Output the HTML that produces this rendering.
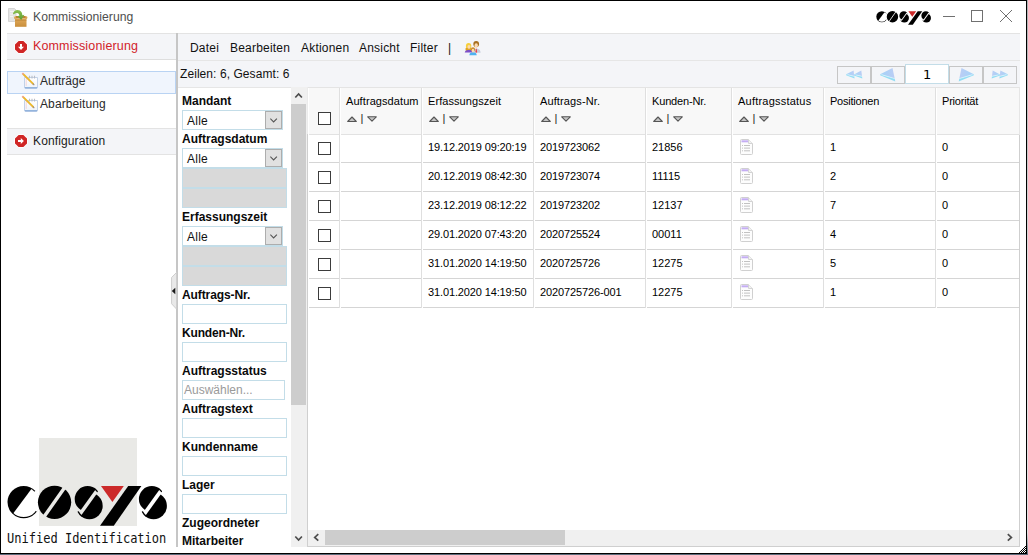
<!DOCTYPE html>
<html lang="de">
<head>
<meta charset="utf-8">
<title>Kommissionierung</title>
<style>
html,body{margin:0;padding:0;}
body{width:1028px;height:555px;overflow:hidden;background:#fff;font-family:"Liberation Sans",sans-serif;color:#000;position:relative;}
div,span,svg{position:absolute;box-sizing:border-box;}
span{white-space:nowrap;}
.g{left:0;top:0;width:0;height:0;}
.t{font-size:12px;line-height:14px;}
.b{font-weight:bold;font-size:12px;line-height:14px;color:#0a0a0a;}
.c{font-size:11px;line-height:13px;color:#000;}
.hl{height:1px;background:#dcdcdc;}
.vl{width:1px;background:#dcdcdc;}
.cb{width:13px;height:13px;border:1px solid #3c3c3c;background:#fff;}
.fi{left:182px;width:105px;height:20px;border:1px solid #c3dde8;background:#fff;}
.fg{left:182px;width:105px;height:20px;border:1px solid #c3dde8;background:#d9d9d9;}
.sel{left:182px;width:101px;height:20px;border:1px solid #c3dde8;background:#fff;}
.dd{left:265px;width:17px;height:18px;border:1px solid #adadad;background:#e1e1e1;}
.pb{top:66px;width:34px;height:18px;border:1px solid #c6c6c6;background:#f4f5f8;}
</style>
</head>
<body>
<div id="window" class="g">
<div style="left:0;top:0;width:1027px;height:554px;border:1px solid #000;background:#fff"></div>
<div style="left:0;top:554px;width:1028px;height:1px;background:#5d6c7c"></div>
<div style="left:1027px;top:0;width:1px;height:555px;background:linear-gradient(#b0b3b5 0,#b8b8b8 12%,#c8c8c8 28%,#e0e0e0 50%,#e2e2e2 96%,#5d6c7c 100%)"></div>
<div class="hl" style="left:7px;top:33px;width:1013px;background:#e3e3e3"></div>
<svg style="left:1018px;top:545px" width="8" height="8" viewBox="1018 545 8 8"><path d="M1025 546h1v1h-1zM1024 547h1v1h-1zM1023 548h1v1h-1zM1025 548h1v1h-1zM1022 549h1v1h-1zM1024 549h1v1h-1zM1021 550h1v1h-1zM1023 550h1v1h-1zM1025 550h1v1h-1zM1020 551h1v1h-1zM1022 551h1v1h-1zM1024 551h1v1h-1zM1019 552h1v1h-1zM1021 552h1v1h-1zM1023 552h1v1h-1zM1025 552h1v1h-1z" fill="#000"/></svg>
</div>
<div id="titlebar" class="g">
<span style="left:33px;top:9px;font-size:12.2px;line-height:16px;color:#4e4e4e;">Kommissionierung</span>
<div style="left:943px;top:16px;width:12px;height:1px;background:#707070"></div>
<div style="left:971px;top:10px;width:12px;height:12px;border:1px solid #707070"></div>
<svg style="left:999px;top:9px" width="14" height="14" viewBox="0 0 14 14"><path d="M1 1 L13 13 M13 1 L1 13" stroke="#707070" stroke-width="1" fill="none"/></svg>
<svg style="left:7px;top:7px" width="22" height="22" viewBox="0 0 22 22"><defs><linearGradient id="gbx" x1="0" y1="0" x2="0" y2="1"><stop offset="0" stop-color="#e0a95a"/><stop offset="1" stop-color="#c98f3c"/></linearGradient><linearGradient id="ggr" x1="0" y1="0" x2="0" y2="1"><stop offset="0" stop-color="#8cc152"/><stop offset="1" stop-color="#5f9e2f"/></linearGradient></defs><path d="M1.5 1.5 H7.5 L9 3 V14.5 H1.5 Z" fill="#e4e4e4" stroke="#cfcfcf" stroke-width="0.8"/><path d="M3 4.5 H7 M3 7 H7 M3 9.5 H6" stroke="#f4f4f4" stroke-width="1"/><path d="M7.5 11.5 L9 9 H18.5 L20 11.5 Z" fill="#b98132"/><path d="M7 10 L8.5 9 L9.5 11.5 L7.5 12 Z M20.5 10 L19 9 L18 11.5 L20 12 Z" fill="#dba652"/><rect x="8" y="11.5" width="11.5" height="8.3" fill="url(#gbx)"/><path d="M8 13.2 H19.5" stroke="#b07a2c" stroke-width="0.8" opacity=".7"/><path d="M6 6.8 C6.5 3.2 10.5 2.2 12.8 3.6 C14.6 4.7 15.3 6.6 15.3 8.2 L17.4 7.8 L14.2 13 L10.3 8.9 L12.4 8.7 C12.3 7.2 11.4 6.2 10 6 C8.6 5.8 7.4 6.6 6.8 7.6 Z" fill="url(#ggr)"/></svg>
<svg role="img" aria-label="cosys" style="left:870px;top:6px" width="66" height="22" viewBox="870 6 66 22"><title>cosys</title><g transform="translate(873.727 -155.495) scale(0.3430)"><clipPath id="ccb"><circle cx="23.7" cy="502.1" r="15"/></clipPath><circle cx="23.7" cy="502.1" r="16.2" fill="#000"/><path d="M33.6 486 L12 515.1 L12 524 L44 524 L44 486 Z" fill="#fff" clip-path="url(#ccb)"/><clipPath id="cob"><circle cx="23.7" cy="502.1" r="16.6"/></clipPath><path d="M23.7 502.1 L41.7 484.7 L46 500 L43.9 516.8 Z" fill="#fff" clip-path="url(#cob)"/><circle cx="54.55" cy="502.35" r="16.65" fill="#000"/><path d="M67.14 484 L41.76 520" stroke="#fff" stroke-width="2.48"/><clipPath id="sab0"><polygon points="100.12,484 72.76,522 55.00,522 55.00,484"/></clipPath><clipPath id="sbb0"><polygon points="103.22,484 75.86,522 112.00,522 112.00,484"/></clipPath><circle cx="87.60" cy="499" r="12.9" fill="#000" clip-path="url(#sab0)"/><circle cx="89.40" cy="505.9" r="13.3" fill="#000" clip-path="url(#sbb0)"/><path d="M95.14 489.35 A12.25 12.25 0 0 1 97.20 491.45" stroke="#000" stroke-width="1.3" fill="none" stroke-linecap="round"/><path d="M81.61 515.87 A12.65 12.65 0 0 1 78.30 511.9" stroke="#000" stroke-width="1.3" fill="none" stroke-linecap="round"/><clipPath id="sab1"><polygon points="164.12,484 136.76,522 119.20,522 119.20,484"/></clipPath><clipPath id="sbb1"><polygon points="167.62,484 140.26,522 176.20,522 176.20,484"/></clipPath><circle cx="151.80" cy="499" r="12.9" fill="#000" clip-path="url(#sab1)"/><circle cx="153.60" cy="505.9" r="13.3" fill="#000" clip-path="url(#sbb1)"/><path d="M159.34 489.35 A12.25 12.25 0 0 1 161.40 491.45" stroke="#000" stroke-width="1.3" fill="none" stroke-linecap="round"/><path d="M145.81 515.87 A12.65 12.65 0 0 1 142.50 511.9" stroke="#000" stroke-width="1.3" fill="none" stroke-linecap="round"/><path d="M101 486 H123.8 L112.4 502 Z" fill="#cc2a2a"/><path d="M128.2 486 H141.4 L113.8 525.8 H100 Z" fill="#000"/></g></svg>
</div>
<div id="sidebar" class="g">
<div style="left:7px;top:34px;width:169px;height:25px;background:#f4f5f8"></div>
<div class="hl" style="left:7px;top:59px;width:169px;background:#dedede"></div>
<span style="left:33px;top:39px;font-size:12.5px;line-height:15px;color:#d2232a;letter-spacing:0.14px">Kommissionierung</span>
<div style="left:7px;top:71px;width:169px;height:23px;border:1px solid #b9d3f3;background:#f0f5fd"></div>
<span class="t" style="left:40px;top:74px;color:#2a2a2a">Aufträge</span>
<span class="t" style="left:40px;top:97px;color:#2a2a2a;letter-spacing:0.1px">Abarbeitung</span>
<div style="left:7px;top:128px;width:169px;height:27px;background:#f4f5f8;border-top:1px solid #e3e3e3;border-bottom:1px solid #e3e3e3"></div>
<span class="t" style="left:33px;top:134px;color:#1a1a1a;letter-spacing:0.13px">Konfiguration</span>
<svg style="left:14px;top:40px" width="14" height="14" viewBox="-1 -1 14 14"><path d="M3.5 0 H8.5 L12 3.5 V8.5 L8.5 12 H3.5 L0 8.5 V3.5 Z" fill="#fff" stroke="#fff" stroke-width="1.6" stroke-linejoin="round"/><path d="M3.6 0 H8.4 L12 3.6 V8.4 L8.4 12 H3.6 L0 8.4 V3.6 Z" fill="#d02626"/><path d="M5 3 H7 V5.8 H9 L6 8.9 L3 5.8 H5 Z" fill="#fff"/></svg>
<svg style="left:14px;top:134px" width="14" height="14" viewBox="-1 -1 14 14"><path d="M3.5 0 H8.5 L12 3.5 V8.5 L8.5 12 H3.5 L0 8.5 V3.5 Z" fill="#fff" stroke="#fff" stroke-width="1.6" stroke-linejoin="round"/><path d="M3.6 0 H8.4 L12 3.6 V8.4 L8.4 12 H3.6 L0 8.4 V3.6 Z" fill="#d02626"/><path d="M3 5 V7 H5.8 V9 L8.9 6 L5.8 3 V5 Z" fill="#fff"/></svg>
<svg style="left:21px;top:72px" width="18" height="18" viewBox="0 0 18 18"><defs><linearGradient id="np72" x1="0" y1="0" x2="0" y2="1"><stop offset="0" stop-color="#ffffff"/><stop offset="1" stop-color="#eef3fa"/></linearGradient></defs><path d="M3.5 5.5 H16.5 V15 Q16.5 16.3 15.2 16.3 H4.8 Q3.5 16.3 3.5 15 Z" fill="url(#np72)" stroke="#bccde6" stroke-width="0.9"/><path d="M3.8 15.8 H16.2" stroke="#86abd8" stroke-width="1.3"/><path d="M5.2 6 V13.8" stroke="#f3c6c6" stroke-width="0.7"/><path d="M8.5 3.8 V6.4 M11 3.8 V6.4 M13.5 3.8 V6.4" stroke="#b9bcc4" stroke-width="1.1"/><path d="M2 1.8 L12.4 12.2" stroke="#dda22a" stroke-width="1.8" stroke-linecap="butt"/><path d="M2.2 1.7 L12.3 11.8" stroke="#fcd432" stroke-width="1.0" stroke-linecap="butt"/><path d="M1.3 1.1 L2.5 2.3" stroke="#f0a58c" stroke-width="1.9"/><path d="M11.9 11.7 L13.3 13.1" stroke="#9a8a76" stroke-width="1.1"/></svg>
<svg style="left:21px;top:95px" width="18" height="18" viewBox="0 0 18 18"><defs><linearGradient id="np95" x1="0" y1="0" x2="0" y2="1"><stop offset="0" stop-color="#ffffff"/><stop offset="1" stop-color="#eef3fa"/></linearGradient></defs><path d="M3.5 5.5 H16.5 V15 Q16.5 16.3 15.2 16.3 H4.8 Q3.5 16.3 3.5 15 Z" fill="url(#np95)" stroke="#bccde6" stroke-width="0.9"/><path d="M3.8 15.8 H16.2" stroke="#86abd8" stroke-width="1.3"/><path d="M5.2 6 V13.8" stroke="#f3c6c6" stroke-width="0.7"/><path d="M8.5 3.8 V6.4 M11 3.8 V6.4 M13.5 3.8 V6.4" stroke="#b9bcc4" stroke-width="1.1"/><path d="M2 1.8 L12.4 12.2" stroke="#dda22a" stroke-width="1.8" stroke-linecap="butt"/><path d="M2.2 1.7 L12.3 11.8" stroke="#fcd432" stroke-width="1.0" stroke-linecap="butt"/><path d="M1.3 1.1 L2.5 2.3" stroke="#f0a58c" stroke-width="1.9"/><path d="M11.9 11.7 L13.3 13.1" stroke="#9a8a76" stroke-width="1.1"/></svg>
<div style="left:39px;top:438px;width:98px;height:88px;background:#e9e9e6"></div>
<svg role="img" aria-label="cosys" style="left:0;top:480px" width="176" height="50" viewBox="0 480 176 50"><title>cosys</title><clipPath id="cca"><circle cx="23.7" cy="502.1" r="15"/></clipPath><circle cx="23.7" cy="502.1" r="16.2" fill="#000"/><path d="M33.6 486 L12 515.1 L12 524 L44 524 L44 486 Z" fill="#fff" clip-path="url(#cca)"/><clipPath id="coa"><circle cx="23.7" cy="502.1" r="16.6"/></clipPath><path d="M23.7 502.1 L41.7 484.7 L46 500 L43.9 516.8 Z" fill="#fff" clip-path="url(#coa)"/><circle cx="54.55" cy="502.35" r="16.65" fill="#000"/><path d="M67.14 484 L41.76 520" stroke="#e9e9e6" stroke-width="3.45"/><clipPath id="saa0"><polygon points="99.52,484 72.16,522 55.00,522 55.00,484"/></clipPath><clipPath id="sba0"><polygon points="103.82,484 76.46,522 112.00,522 112.00,484"/></clipPath><circle cx="87.60" cy="499" r="12.9" fill="#000" clip-path="url(#saa0)"/><circle cx="89.40" cy="505.9" r="13.3" fill="#000" clip-path="url(#sba0)"/><path d="M95.14 489.35 A12.25 12.25 0 0 1 97.20 491.45" stroke="#000" stroke-width="1.3" fill="none" stroke-linecap="round"/><path d="M81.61 515.87 A12.65 12.65 0 0 1 78.30 511.9" stroke="#000" stroke-width="1.3" fill="none" stroke-linecap="round"/><clipPath id="saa1"><polygon points="163.52,484 136.16,522 119.20,522 119.20,484"/></clipPath><clipPath id="sba1"><polygon points="168.22,484 140.86,522 176.20,522 176.20,484"/></clipPath><circle cx="151.80" cy="499" r="12.9" fill="#000" clip-path="url(#saa1)"/><circle cx="153.60" cy="505.9" r="13.3" fill="#000" clip-path="url(#sba1)"/><path d="M159.34 489.35 A12.25 12.25 0 0 1 161.40 491.45" stroke="#000" stroke-width="1.3" fill="none" stroke-linecap="round"/><path d="M145.81 515.87 A12.65 12.65 0 0 1 142.50 511.9" stroke="#000" stroke-width="1.3" fill="none" stroke-linecap="round"/><path d="M101 486 H123.8 L112.4 502 Z" fill="#cc2a2a"/><path d="M128.2 486 H141.4 L113.8 525.8 H100 Z" fill="#000"/></svg>
<span style="left:7px;top:529.7px;font-family:'DejaVu Sans Mono','Liberation Mono',monospace;font-size:13.6px;line-height:17px;color:#111;transform-origin:0 0;transform:scaleX(0.885)">Unified Identification</span>
</div>
<div id="splitter" class="g">
<div style="left:176px;top:33px;width:2px;height:514px;background:#c6c6c6"></div>
<svg style="left:170px;top:272px" width="7" height="38" viewBox="0 0 7 38"><path d="M6.5 0.5 L1.6 5.5 V31.8 L6.5 37 Z" fill="#e9e9e9" stroke="#cdcdcd" stroke-width="1"/><path d="M5.3 15.8 V22.2 L1.8 19 Z" fill="#1a1a1a"/></svg>
</div>
<div id="menubar" class="g">
<div style="left:178px;top:34px;width:842px;height:26px;background:#f4f5f8"></div>
<div class="hl" style="left:178px;top:60px;width:842px;background:#e6e6e6"></div>
<div style="left:178px;top:61px;width:842px;height:26px;background:#f4f5f8"></div>
<span class="t" style="left:190px;top:41px;color:#111;letter-spacing:0.2px">Datei</span>
<span class="t" style="left:230px;top:41px;color:#111;letter-spacing:0.2px">Bearbeiten</span>
<span class="t" style="left:301px;top:41px;color:#111;letter-spacing:0.2px">Aktionen</span>
<span class="t" style="left:359px;top:41px;color:#111;letter-spacing:0.2px">Ansicht</span>
<span class="t" style="left:410px;top:41px;color:#111;letter-spacing:0.2px">Filter</span>
<span class="t" style="left:448px;top:41px;color:#111;letter-spacing:0.2px">|</span>
<svg style="left:464px;top:40px" width="18" height="16" viewBox="0 -0.5 18 16"><ellipse cx="4.6" cy="5.6" rx="2.7" ry="3.2" fill="#f6cf3a"/><path d="M1.6 7.5 Q1 10 2.5 10.5 L6.8 10.5 Q8 9.5 7.2 7 Z" fill="#e0a325"/><ellipse cx="5" cy="6.4" rx="1.5" ry="1.9" fill="#fbd9b0"/><path d="M0.7 12 Q0.9 9.6 3.6 9.5 L6.6 9.5 Q8.6 9.8 8.8 12 Z" fill="#7b4fc9"/><ellipse cx="12.2" cy="3.6" rx="2.9" ry="3.1" fill="#a8701f"/><ellipse cx="12.2" cy="5" rx="1.7" ry="2.3" fill="#fbd9b0"/><path d="M8.8 12.3 Q8.8 8.6 11.2 8.2 L13.6 8.2 Q16.4 8.6 16.6 12.3 Z" fill="#c5ccdc"/><path d="M11.9 8.2 L12.7 8.2 L13.2 11.8 L12.3 12.3 L11.4 11.8 Z" fill="#e8444c"/><ellipse cx="9" cy="8.9" rx="2.1" ry="2.1" fill="#c98a28"/><ellipse cx="9" cy="10.2" rx="1.3" ry="1.9" fill="#fbd9b0"/><path d="M5.3 14.8 Q5.3 12.4 7.8 12.1 L10.4 12.1 Q12.7 12.4 12.8 14.8 Z" fill="#4db1f0"/></svg>
</div>
<div id="toolbar" class="g">
<span class="t" style="left:180px;top:67px;color:#111;letter-spacing:0.07px">Zeilen: 6, Gesamt: 6</span>
<div class="pb" style="left:837px"></div>
<div class="pb" style="left:871px"></div>
<div class="pb" style="left:949px"></div>
<div class="pb" style="left:983px"></div>
<div style="left:905px;top:64px;width:44px;height:20px;border:1px solid #c3dde8;background:#fff"></div>
<span style="left:923px;top:67px;font-size:13px;line-height:16px;font-family:'DejaVu Sans','Liberation Sans',sans-serif;color:#000">1</span>
<svg style="left:837px;top:66px" width="180" height="18" viewBox="837 66 180 18"><defs><linearGradient id="pt1" x1="0" y1="0" x2="1" y2="0"><stop offset="0" stop-color="#a3d3f8"/><stop offset="1" stop-color="#bccdf4"/></linearGradient><linearGradient id="pt2" x1="1" y1="0" x2="0" y2="0"><stop offset="0" stop-color="#a3d3f8"/><stop offset="1" stop-color="#bccdf4"/></linearGradient></defs><polygon points="846.2,74.3 853.6,70.6 854.3,76.3" fill="url(#pt1)"/><polygon points="846.2,74.3 854.3,76.3 854.6,78.4 846.2,75.3" fill="#93dcf3"/><polyline points="847.7,74.7 854.3,76.3" stroke="#e4f8fd" stroke-width="0.7" fill="none"/><polygon points="854.0,74.5 861.3,70.6 862.0,76.3" fill="url(#pt1)"/><polygon points="854.0,74.5 862.0,76.3 862.3,78.4 854.0,75.5" fill="#93dcf3"/><polyline points="855.5,74.9 862.0,76.3" stroke="#e4f8fd" stroke-width="0.7" fill="none"/><polygon points="880.2,74.3 892.5,68.0 894.7,78.6" fill="url(#pt1)"/><polygon points="880.2,74.3 894.7,78.6 895.3,81.5 880.2,75.3" fill="#93dcf3"/><polyline points="881.7,74.7 894.7,78.6" stroke="#e4f8fd" stroke-width="0.7" fill="none"/><polygon points="1007.8,74.3 1000.4,70.6 999.7,76.3" fill="url(#pt2)"/><polygon points="1007.8,74.3 999.7,76.3 999.4,78.4 1007.8,75.3" fill="#93dcf3"/><polyline points="1006.3,74.7 999.7,76.3" stroke="#e4f8fd" stroke-width="0.7" fill="none"/><polygon points="1000.0,74.5 992.7,70.6 992.0,76.3" fill="url(#pt2)"/><polygon points="1000.0,74.5 992.0,76.3 991.7,78.4 1000.0,75.5" fill="#93dcf3"/><polyline points="998.5,74.9 992.0,76.3" stroke="#e4f8fd" stroke-width="0.7" fill="none"/><polygon points="973.8,74.3 961.5,68.0 959.3,78.6" fill="url(#pt2)"/><polygon points="973.8,74.3 959.3,78.6 958.7,81.5 973.8,75.3" fill="#93dcf3"/><polyline points="972.3,74.7 959.3,78.6" stroke="#e4f8fd" stroke-width="0.7" fill="none"/></svg>
</div>
<div id="filter" class="g">
<div style="left:178px;top:88px;width:113px;height:465px;background:#fff"></div>
<div class="hl" style="left:178px;top:87px;width:113px;background:#e6e6e6"></div>
<span class="b" style="left:182px;top:94px;letter-spacing:0.00px">Mandant</span>
<span class="b" style="left:182px;top:132px;letter-spacing:0.00px">Auftragsdatum</span>
<span class="b" style="left:182px;top:210px;letter-spacing:0.00px">Erfassungszeit</span>
<span class="b" style="left:182px;top:288px;letter-spacing:-0.10px">Auftrags-Nr.</span>
<span class="b" style="left:182px;top:326px;letter-spacing:-0.17px">Kunden-Nr.</span>
<span class="b" style="left:182px;top:364px;letter-spacing:0.00px">Auftragsstatus</span>
<span class="b" style="left:182px;top:402px;letter-spacing:0.00px">Auftragstext</span>
<span class="b" style="left:182px;top:440px;letter-spacing:0.00px">Kundenname</span>
<span class="b" style="left:182px;top:478px;letter-spacing:0.00px">Lager</span>
<span class="b" style="left:182px;top:516px;letter-spacing:0.00px">Zugeordneter</span>
<span class="b" style="left:182px;top:534px;letter-spacing:0.00px">Mitarbeiter</span>
<div class="sel" style="top:110px"></div>
<span class="t" style="left:187px;top:114px;color:#111;letter-spacing:0.25px">Alle</span>
<div class="dd" style="top:111px"></div>
<svg style="left:270px;top:118px" width="8" height="6" viewBox="0 0 8 6"><path d="M0.3 0.6 L3.6 4 L6.9 0.6" stroke="#555" stroke-width="1.1" fill="none"/></svg>
<div class="sel" style="top:148px"></div>
<span class="t" style="left:187px;top:152px;color:#111;letter-spacing:0.25px">Alle</span>
<div class="dd" style="top:149px"></div>
<svg style="left:270px;top:156px" width="8" height="6" viewBox="0 0 8 6"><path d="M0.3 0.6 L3.6 4 L6.9 0.6" stroke="#555" stroke-width="1.1" fill="none"/></svg>
<div class="sel" style="top:226px"></div>
<span class="t" style="left:187px;top:230px;color:#111;letter-spacing:0.25px">Alle</span>
<div class="dd" style="top:227px"></div>
<svg style="left:270px;top:234px" width="8" height="6" viewBox="0 0 8 6"><path d="M0.3 0.6 L3.6 4 L6.9 0.6" stroke="#555" stroke-width="1.1" fill="none"/></svg>
<div class="fg" style="top:168px"></div>
<div class="fg" style="top:188px"></div>
<div class="fg" style="top:246px"></div>
<div class="fg" style="top:266px"></div>
<div class="fi" style="top:304px"></div>
<div class="fi" style="top:342px"></div>
<div class="fi" style="top:418px"></div>
<div class="fi" style="top:456px"></div>
<div class="fi" style="top:494px"></div>
<div class="fi" style="top:380px;width:103px"></div>
<span class="t" style="left:184px;top:383px;color:#9a9a9a">Auswählen...</span>
<div style="left:178px;top:547px;width:113px;height:6px;background:#fff"></div>
</div>
<div id="vscroll" class="g">
<div style="left:291px;top:87px;width:16px;height:460px;background:#f0f0f0"></div>
<div style="left:291px;top:104px;width:15px;height:301px;background:#cdcdcd"></div>
<svg style="left:294px;top:92px" width="10" height="8" viewBox="0 0 10 8"><path d="M1.3 5.5 L4.6 1.9 L7.9 5.5" stroke="#4d4d4d" stroke-width="1.7" fill="none"/></svg>
<svg style="left:294px;top:535px" width="10" height="8" viewBox="0 0 10 8"><path d="M1.3 1.5 L4.6 5.1 L7.9 1.5" stroke="#4d4d4d" stroke-width="1.7" fill="none"/></svg>
<div class="vl" style="left:307px;top:87px;height:47px;background:#ebebeb"></div>
<div class="vl" style="left:307px;top:134px;height:413px;background:#cfcfcf"></div>
</div>
<div id="grid" class="g">
<div style="left:309px;top:88px;width:710px;height:46px;background:#f8f8f8"></div>
<div class="hl" style="left:308px;top:87px;width:712px;background:#e4e4e4"></div>
<div class="hl" style="left:309px;top:134px;width:711px;background:#e2e2e2"></div>
<div class="hl" style="left:309px;top:162px;width:711px;background:#d5d5d5"></div>
<div class="hl" style="left:309px;top:191px;width:711px;background:#d5d5d5"></div>
<div class="hl" style="left:309px;top:220px;width:711px;background:#d5d5d5"></div>
<div class="hl" style="left:309px;top:249px;width:711px;background:#d5d5d5"></div>
<div class="hl" style="left:309px;top:278px;width:711px;background:#d5d5d5"></div>
<div class="hl" style="left:309px;top:307px;width:711px;background:#d5d5d5"></div>
<div class="vl" style="left:339px;top:88px;height:220px;background:#dfdfdf"></div>
<div class="vl" style="left:340px;top:88px;height:220px;background:#fff"></div>
<div class="vl" style="left:421px;top:88px;height:220px;background:#dfdfdf"></div>
<div class="vl" style="left:422px;top:88px;height:220px;background:#fff"></div>
<div class="vl" style="left:533px;top:88px;height:220px;background:#dfdfdf"></div>
<div class="vl" style="left:534px;top:88px;height:220px;background:#fff"></div>
<div class="vl" style="left:645px;top:88px;height:220px;background:#dfdfdf"></div>
<div class="vl" style="left:646px;top:88px;height:220px;background:#fff"></div>
<div class="vl" style="left:731px;top:88px;height:220px;background:#dfdfdf"></div>
<div class="vl" style="left:732px;top:88px;height:220px;background:#fff"></div>
<div class="vl" style="left:823px;top:88px;height:220px;background:#dfdfdf"></div>
<div class="vl" style="left:824px;top:88px;height:220px;background:#fff"></div>
<div class="vl" style="left:935px;top:88px;height:220px;background:#dfdfdf"></div>
<div class="vl" style="left:936px;top:88px;height:220px;background:#fff"></div>
<div class="vl" style="left:1019px;top:87px;height:48px;background:#e6e6e6"></div>
<div class="vl" style="left:1019px;top:135px;height:412px;background:#cfcfcf"></div>
<span class="c" style="left:346px;top:95px;letter-spacing:0.08px">Auftragsdatum</span>
<svg style="left:347px;top:115px" width="32" height="9" viewBox="0 0 32 9"><path d="M0.7 6.5 L5 2 L9.3 6.5 Z" fill="#c4c4c4" stroke="#555" stroke-width="1.1" stroke-linejoin="round"/><path d="M20.7 1.8 L25 6.2 L29.3 1.8 Z" fill="#c4c4c4" stroke="#555" stroke-width="1.1" stroke-linejoin="round"/></svg>
<span class="c" style="left:360.5px;top:112px;color:#222">|</span>
<span class="c" style="left:428px;top:95px;letter-spacing:0.07px">Erfassungszeit</span>
<svg style="left:429px;top:115px" width="32" height="9" viewBox="0 0 32 9"><path d="M0.7 6.5 L5 2 L9.3 6.5 Z" fill="#c4c4c4" stroke="#555" stroke-width="1.1" stroke-linejoin="round"/><path d="M20.7 1.8 L25 6.2 L29.3 1.8 Z" fill="#c4c4c4" stroke="#555" stroke-width="1.1" stroke-linejoin="round"/></svg>
<span class="c" style="left:442.5px;top:112px;color:#222">|</span>
<span class="c" style="left:540px;top:95px;letter-spacing:0.12px">Auftrags-Nr.</span>
<svg style="left:541px;top:115px" width="32" height="9" viewBox="0 0 32 9"><path d="M0.7 6.5 L5 2 L9.3 6.5 Z" fill="#c4c4c4" stroke="#555" stroke-width="1.1" stroke-linejoin="round"/><path d="M20.7 1.8 L25 6.2 L29.3 1.8 Z" fill="#c4c4c4" stroke="#555" stroke-width="1.1" stroke-linejoin="round"/></svg>
<span class="c" style="left:554.5px;top:112px;color:#222">|</span>
<span class="c" style="left:652px;top:95px;letter-spacing:-0.15px">Kunden-Nr.</span>
<svg style="left:653px;top:115px" width="32" height="9" viewBox="0 0 32 9"><path d="M0.7 6.5 L5 2 L9.3 6.5 Z" fill="#c4c4c4" stroke="#555" stroke-width="1.1" stroke-linejoin="round"/><path d="M20.7 1.8 L25 6.2 L29.3 1.8 Z" fill="#c4c4c4" stroke="#555" stroke-width="1.1" stroke-linejoin="round"/></svg>
<span class="c" style="left:666.5px;top:112px;color:#222">|</span>
<span class="c" style="left:738px;top:95px;letter-spacing:0.22px">Auftragsstatus</span>
<svg style="left:739px;top:115px" width="32" height="9" viewBox="0 0 32 9"><path d="M0.7 6.5 L5 2 L9.3 6.5 Z" fill="#c4c4c4" stroke="#555" stroke-width="1.1" stroke-linejoin="round"/><path d="M20.7 1.8 L25 6.2 L29.3 1.8 Z" fill="#c4c4c4" stroke="#555" stroke-width="1.1" stroke-linejoin="round"/></svg>
<span class="c" style="left:752.5px;top:112px;color:#222">|</span>
<span class="c" style="left:830px;top:95px;letter-spacing:-0.22px">Positionen</span>
<span class="c" style="left:942px;top:95px;letter-spacing:-0.20px">Priorität</span>
<div class="cb" style="left:318px;top:112px"></div>
<div class="cb" style="left:318px;top:142px"></div>
<span class="c" style="left:428px;top:141px;letter-spacing:-0.13px">19.12.2019 09:20:19</span>
<span class="c" style="left:540px;top:141px;letter-spacing:-0.12px">2019723062</span>
<span class="c" style="left:652px;top:141px">21856</span>
<svg style="left:740px;top:139px" width="13" height="16" viewBox="0 0 13 16"><path d="M1.5 0.5 H8.5 L12.5 4.5 V14.5 Q12.5 15.5 11.5 15.5 H1.5 Q0.5 15.5 0.5 14.5 V1.5 Q0.5 0.5 1.5 0.5 Z" fill="#fdfdfd" stroke="#d0d0d0"/><path d="M8.5 0.5 V4.5 H12.5" fill="#f2f2f2" stroke="#d4d4d4"/><rect x="1.5" y="1.3" width="6.5" height="2" fill="#c4adf3"/><path d="M2 6.5 H3 M4 6.5 H10 M2 9.1 H3 M4 9.1 H10 M2 11.8 H3 M4 11.8 H10" stroke="#c2c2c2"/></svg>
<span class="c" style="left:830px;top:141px">1</span>
<span class="c" style="left:942px;top:141px">0</span>
<div class="cb" style="left:318px;top:171px"></div>
<span class="c" style="left:428px;top:170px;letter-spacing:-0.13px">20.12.2019 08:42:30</span>
<span class="c" style="left:540px;top:170px;letter-spacing:-0.12px">2019723074</span>
<span class="c" style="left:652px;top:170px">11115</span>
<svg style="left:740px;top:168px" width="13" height="16" viewBox="0 0 13 16"><path d="M1.5 0.5 H8.5 L12.5 4.5 V14.5 Q12.5 15.5 11.5 15.5 H1.5 Q0.5 15.5 0.5 14.5 V1.5 Q0.5 0.5 1.5 0.5 Z" fill="#fdfdfd" stroke="#d0d0d0"/><path d="M8.5 0.5 V4.5 H12.5" fill="#f2f2f2" stroke="#d4d4d4"/><rect x="1.5" y="1.3" width="6.5" height="2" fill="#c4adf3"/><path d="M2 6.5 H3 M4 6.5 H10 M2 9.1 H3 M4 9.1 H10 M2 11.8 H3 M4 11.8 H10" stroke="#c2c2c2"/></svg>
<span class="c" style="left:830px;top:170px">2</span>
<span class="c" style="left:942px;top:170px">0</span>
<div class="cb" style="left:318px;top:200px"></div>
<span class="c" style="left:428px;top:199px;letter-spacing:-0.13px">23.12.2019 08:12:22</span>
<span class="c" style="left:540px;top:199px;letter-spacing:-0.12px">2019723202</span>
<span class="c" style="left:652px;top:199px">12137</span>
<svg style="left:740px;top:197px" width="13" height="16" viewBox="0 0 13 16"><path d="M1.5 0.5 H8.5 L12.5 4.5 V14.5 Q12.5 15.5 11.5 15.5 H1.5 Q0.5 15.5 0.5 14.5 V1.5 Q0.5 0.5 1.5 0.5 Z" fill="#fdfdfd" stroke="#d0d0d0"/><path d="M8.5 0.5 V4.5 H12.5" fill="#f2f2f2" stroke="#d4d4d4"/><rect x="1.5" y="1.3" width="6.5" height="2" fill="#c4adf3"/><path d="M2 6.5 H3 M4 6.5 H10 M2 9.1 H3 M4 9.1 H10 M2 11.8 H3 M4 11.8 H10" stroke="#c2c2c2"/></svg>
<span class="c" style="left:830px;top:199px">7</span>
<span class="c" style="left:942px;top:199px">0</span>
<div class="cb" style="left:318px;top:229px"></div>
<span class="c" style="left:428px;top:228px;letter-spacing:-0.13px">29.01.2020 07:43:20</span>
<span class="c" style="left:540px;top:228px;letter-spacing:-0.12px">2020725524</span>
<span class="c" style="left:652px;top:228px">00011</span>
<svg style="left:740px;top:226px" width="13" height="16" viewBox="0 0 13 16"><path d="M1.5 0.5 H8.5 L12.5 4.5 V14.5 Q12.5 15.5 11.5 15.5 H1.5 Q0.5 15.5 0.5 14.5 V1.5 Q0.5 0.5 1.5 0.5 Z" fill="#fdfdfd" stroke="#d0d0d0"/><path d="M8.5 0.5 V4.5 H12.5" fill="#f2f2f2" stroke="#d4d4d4"/><rect x="1.5" y="1.3" width="6.5" height="2" fill="#c4adf3"/><path d="M2 6.5 H3 M4 6.5 H10 M2 9.1 H3 M4 9.1 H10 M2 11.8 H3 M4 11.8 H10" stroke="#c2c2c2"/></svg>
<span class="c" style="left:830px;top:228px">4</span>
<span class="c" style="left:942px;top:228px">0</span>
<div class="cb" style="left:318px;top:258px"></div>
<span class="c" style="left:428px;top:257px;letter-spacing:-0.13px">31.01.2020 14:19:50</span>
<span class="c" style="left:540px;top:257px;letter-spacing:-0.12px">2020725726</span>
<span class="c" style="left:652px;top:257px">12275</span>
<svg style="left:740px;top:255px" width="13" height="16" viewBox="0 0 13 16"><path d="M1.5 0.5 H8.5 L12.5 4.5 V14.5 Q12.5 15.5 11.5 15.5 H1.5 Q0.5 15.5 0.5 14.5 V1.5 Q0.5 0.5 1.5 0.5 Z" fill="#fdfdfd" stroke="#d0d0d0"/><path d="M8.5 0.5 V4.5 H12.5" fill="#f2f2f2" stroke="#d4d4d4"/><rect x="1.5" y="1.3" width="6.5" height="2" fill="#c4adf3"/><path d="M2 6.5 H3 M4 6.5 H10 M2 9.1 H3 M4 9.1 H10 M2 11.8 H3 M4 11.8 H10" stroke="#c2c2c2"/></svg>
<span class="c" style="left:830px;top:257px">5</span>
<span class="c" style="left:942px;top:257px">0</span>
<div class="cb" style="left:318px;top:287px"></div>
<span class="c" style="left:428px;top:286px;letter-spacing:-0.13px">31.01.2020 14:19:50</span>
<span class="c" style="left:540px;top:286px;letter-spacing:-0.12px">2020725726-001</span>
<span class="c" style="left:652px;top:286px">12275</span>
<svg style="left:740px;top:284px" width="13" height="16" viewBox="0 0 13 16"><path d="M1.5 0.5 H8.5 L12.5 4.5 V14.5 Q12.5 15.5 11.5 15.5 H1.5 Q0.5 15.5 0.5 14.5 V1.5 Q0.5 0.5 1.5 0.5 Z" fill="#fdfdfd" stroke="#d0d0d0"/><path d="M8.5 0.5 V4.5 H12.5" fill="#f2f2f2" stroke="#d4d4d4"/><rect x="1.5" y="1.3" width="6.5" height="2" fill="#c4adf3"/><path d="M2 6.5 H3 M4 6.5 H10 M2 9.1 H3 M4 9.1 H10 M2 11.8 H3 M4 11.8 H10" stroke="#c2c2c2"/></svg>
<span class="c" style="left:830px;top:286px">1</span>
<span class="c" style="left:942px;top:286px">0</span>
</div>
<div id="hscroll" class="g">
<div style="left:308px;top:530px;width:711px;height:16px;background:#f0f0f0"></div>
<div style="left:325px;top:530px;width:240px;height:15px;background:#cdcdcd"></div>
<div class="hl" style="left:308px;top:546px;width:712px;background:#cfcfcf"></div>
<svg style="left:312px;top:533px" width="8" height="10" viewBox="0 0 8 10"><path d="M6.3 1.1 L2.7 4.4 L6.3 7.7" stroke="#4d4d4d" stroke-width="1.7" fill="none"/></svg>
<svg style="left:1006px;top:533px" width="8" height="10" viewBox="0 0 8 10"><path d="M1.8 1.1 L5.4 4.4 L1.8 7.7" stroke="#4d4d4d" stroke-width="1.7" fill="none"/></svg>
</div>
</body>
</html>
